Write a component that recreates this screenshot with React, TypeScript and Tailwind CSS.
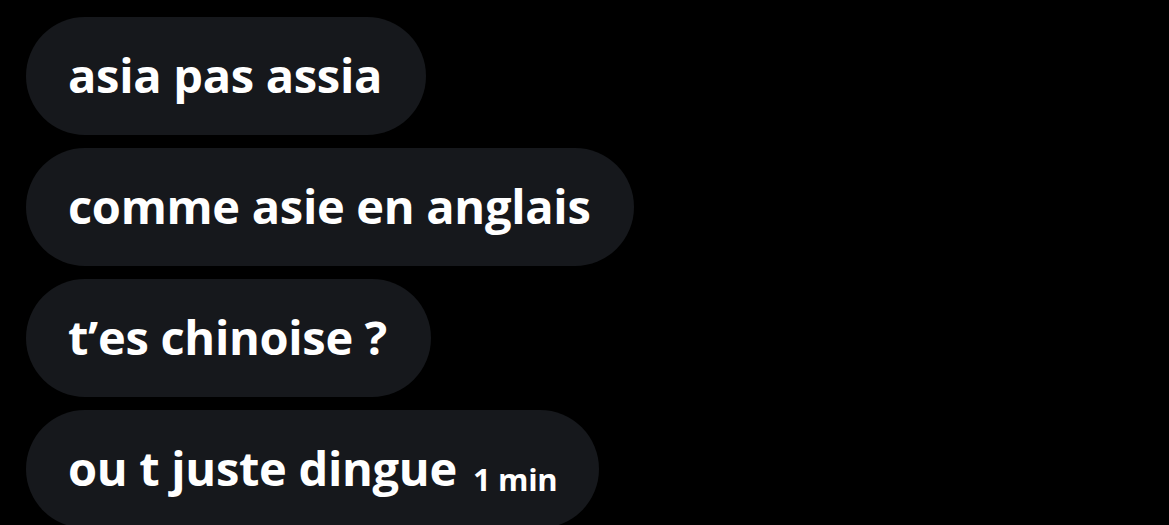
export default function App() {
  const messages = ["asia pas assia", "comme asie en anglais", "t\u2019es chinoise ?"];
  return (
    <div className="w-[1169px] h-[525px] overflow-hidden bg-black pl-[26px] pt-[17px] flex flex-col gap-[13px] font-['Open_Sans',sans-serif]">
      {messages.map((m) => (
        <div key={m} className="w-fit h-[118px] shrink-0 rounded-full bg-[#16181c] pl-[42px] pr-[44px] flex items-center">
          <span className="text-white text-[47px] font-bold tracking-[-0.3px] leading-none pb-[2px]">{m}</span>
        </div>
      ))}
      <div className="w-fit h-[118px] shrink-0 rounded-full bg-[#16181c] pl-[42px] pr-[42px] flex items-center">
        <span className="text-white text-[47px] font-bold tracking-[-0.3px] leading-none pb-[2px]">ou t juste dingue</span>
        <span className="text-white text-[31px] font-bold tracking-[-0.3px] leading-none ml-[16px] mt-[20px]">1 min</span>
      </div>
    </div>
  );
}
